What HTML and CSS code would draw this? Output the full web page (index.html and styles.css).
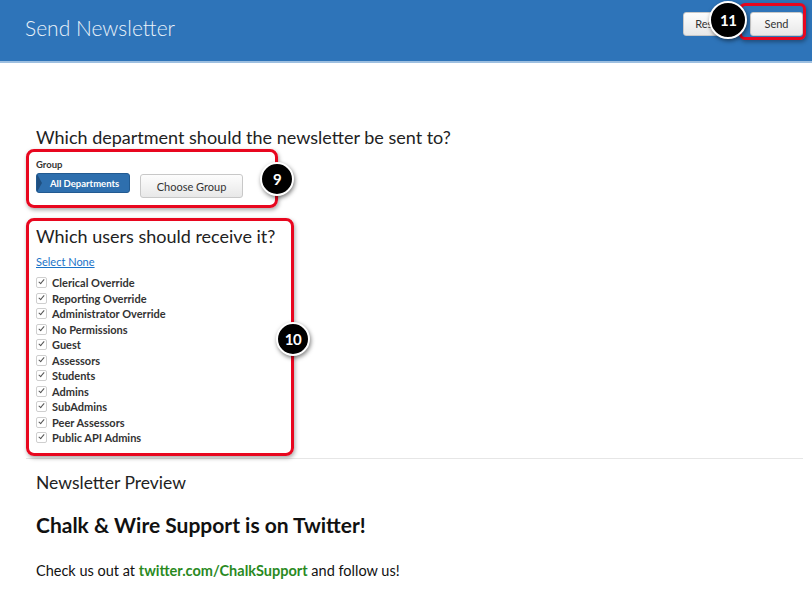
FILE: index.html
```html
<!doctype html>
<html>
  <head>
    <meta charset="UTF-8" />
    <title>Send Newsletter</title>
    <link rel="stylesheet" href="styles.css">
  </head>
  <body>
    <header class="topbar">
      <h1 class="topbar-title">Send Newsletter</h1>
      <div class="topbar-actions">
        <button class="btn">Reset</button>
        <div class="callout callout-send">
          <button class="btn">Send</button>
        </div>
        <span class="badge badge-11">11</span>
      </div>
    </header>

    <main class="content">
      <h2 class="question">Which department should the newsletter be sent to?</h2>
      <div class="callout callout-group">
        <div class="field-label">Group</div>
        <div class="group-row">
          <span class="pill">All Departments</span>
          <button class="btn btn-choose">Choose Group</button>
        </div>
        <span class="badge badge-9">9</span>
      </div>

      <div class="callout callout-users">
        <h2 class="question">Which users should receive it?</h2>
        <a class="select-none" href="#">Select None</a>
        <ul class="roles">
          <li><span class="check"></span>Clerical Override</li>
          <li><span class="check"></span>Reporting Override</li>
          <li><span class="check"></span>Administrator Override</li>
          <li><span class="check"></span>No Permissions</li>
          <li><span class="check"></span>Guest</li>
          <li><span class="check"></span>Assessors</li>
          <li><span class="check"></span>Students</li>
          <li><span class="check"></span>Admins</li>
          <li><span class="check"></span>SubAdmins</li>
          <li><span class="check"></span>Peer Assessors</li>
          <li><span class="check"></span>Public API Admins</li>
        </ul>
        <span class="badge badge-10">10</span>
      </div>

      <section class="preview">
        <h3 class="preview-title">Newsletter Preview</h3>
        <h2 class="preview-heading">Chalk &amp; Wire Support is on Twitter!</h2>
        <p class="preview-text">Check us out at <a href="#">twitter.com/ChalkSupport</a> and follow us!</p>
      </section>
    </main>
  </body>
</html>
```

FILE: styles.css
```css
html,
body {
  margin: 0;
  background: #fff;
  font-family: Lato, "Open Sans", sans-serif;
  color: #222;
}
.topbar {
  height: 63px;
  background-color: #2e74b9;
  border-bottom: 2px solid #9dbfe0;
  display: flex;
  align-items: center;
  justify-content: space-between;
  padding: 0 6px 0 25px;
  box-sizing: border-box;
}
.topbar-title {
  margin: 0 0 7px;
  font-size: 21px;
  font-weight: 300;
  color: #eaf2fa;
}
.topbar-actions {
  position: relative;
  display: flex;
  align-items: flex-start;
  gap: 5px;
  margin-bottom: 10px;
}
.btn {
  font-family: inherit;
  font-size: 11px;
  color: #333;
  height: 24px;
  padding: 0 11px;
  border: 1px solid #c8c8c8;
  border-radius: 3px;
  background: linear-gradient(#fdfdfd, #e8e8e8);
}
.callout {
  position: relative;
  border: 3px solid #e8071f;
  border-radius: 8px;
  box-shadow: 1px 2px 4px rgba(0, 0, 0, 0.35);
}
.callout-send {
  padding: 6px 0 1px 8px;
  margin-top: -9px;
  border-radius: 6px;
}
.callout-send .btn {
  width: 53px;
  padding: 0;
}
.badge {
  position: absolute;
  width: 34px;
  height: 34px;
  border-radius: 50%;
  background: #000;
  border: 2px solid #fff;
  box-shadow: 1px 2px 4px rgba(0, 0, 0, 0.5);
  color: #fff;
  font-weight: bold;
  font-size: 15px;
  display: flex;
  align-items: center;
  justify-content: center;
  box-sizing: border-box;
  letter-spacing: -0.5px;
}
.badge-11 {
  left: 26px;
  top: -11px;
  width: 38px;
  height: 38px;
}
.badge-9 {
  right: -19px;
  top: 10px;
}
.badge-10 {
  right: -19px;
  top: 101px;
}
.content {
  padding: 63px 0 0 26px;
}
.question {
  margin: 0;
  font-size: 18px;
  font-weight: 400;
  color: #222;
}
.content > .question {
  margin-left: 10px;
  margin-bottom: 1px;
}
.callout-group {
  width: 239px;
  padding: 7px 0 7px 7px;
}
.field-label {
  font-size: 9.5px;
  font-weight: bold;
  color: #333;
  margin-bottom: 3px;
}
.group-row {
  display: flex;
  align-items: flex-start;
  gap: 10px;
}
.pill {
  position: relative;
  display: inline-block;
  height: 20px;
  line-height: 19px;
  padding: 0 0 0 13px;
  font-size: 9.5px;
  font-weight: bold;
  color: #fff;
  background: #2e6fae;
  border: 1px solid #225a91;
  border-radius: 3px;
  box-sizing: border-box;
  width: 94px;
}
.pill::before {
  content: "";
  position: absolute;
  left: 0;
  top: 0;
  border-left: 5px solid #1f4f80;
  border-top: 9px solid transparent;
  border-bottom: 9px solid transparent;
}
.btn-choose {
  width: 103px;
  height: 24px;
  margin-top: 1px;
  padding: 0;
}
.callout-users {
  margin-top: 10px;
  width: 255px;
  padding: 4px 0 7px 7px;
}
.select-none {
  display: inline-block;
  margin-top: 8px;
  font-size: 11px;
  color: #1a73c8;
}
.roles {
  list-style: none;
  margin: 6px 0 0;
  padding: 0;
}
.roles li {
  display: flex;
  align-items: center;
  height: 15.5px;
  font-size: 11px;
  font-weight: bold;
  color: #333;
}
.check {
  width: 9px;
  height: 9px;
  border: 1px solid #cfcfcf;
  border-radius: 2px;
  margin-right: 5px;
  position: relative;
}
.check::after {
  content: "";
  position: absolute;
  left: 3px;
  top: 0;
  width: 2px;
  height: 5px;
  border-right: 1px solid #555;
  border-bottom: 1px solid #555;
  transform: rotate(40deg);
}
.preview {
  margin: 2px 9px 0 0;
  border-top: 1px solid #e6e6e6;
  padding: 13px 0 0 10px;
}
.preview-title {
  margin: 0;
  font-size: 17.5px;
  font-weight: 400;
  color: #222;
}
.preview-heading {
  margin: 19px 0 0;
  font-size: 21px;
  font-weight: bold;
  color: #111;
}
.preview-text {
  margin: 25px 0 0;
  font-size: 14.5px;
  color: #111;
}
.preview-text a {
  color: #2a8a1f;
  font-weight: bold;
  text-decoration: none;
}
```
